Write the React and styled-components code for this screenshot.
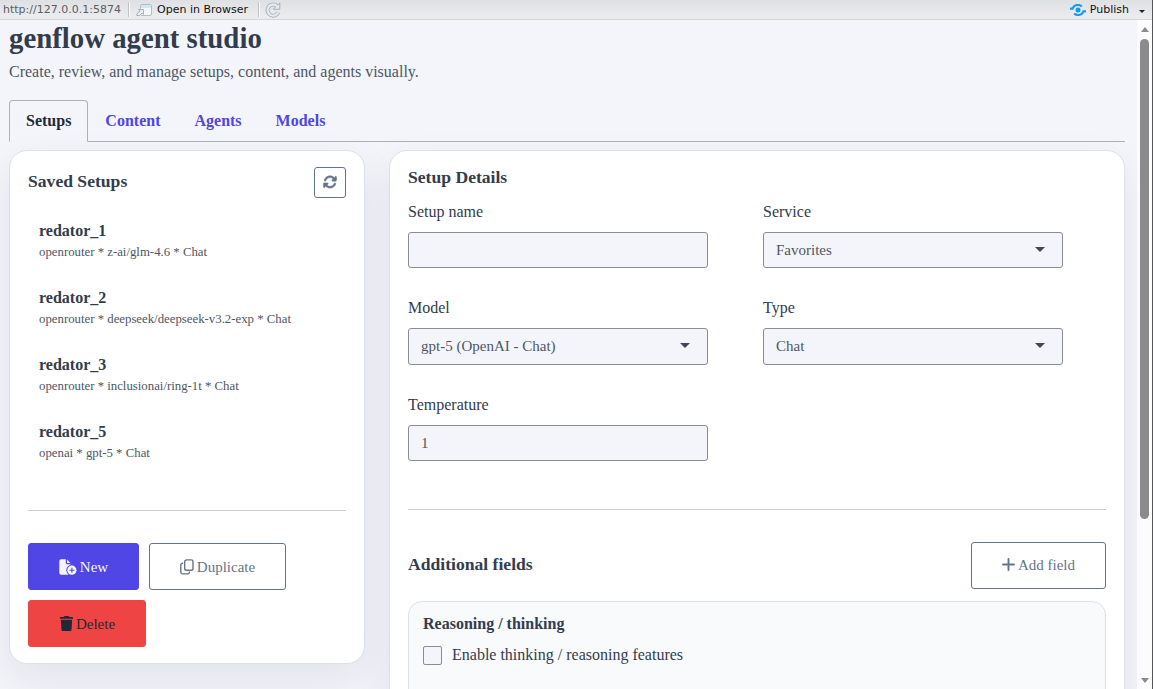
import React from "react";
import styled, { createGlobalStyle, css } from "styled-components";
import { FaArrowsRotate, FaTrash } from "react-icons/fa6";

const GlobalStyle = createGlobalStyle`
  * { box-sizing: border-box; }
  html, body { margin: 0; padding: 0; overflow: hidden; }
  body {
    background: #f4f5fb;
    color: #333c4d;
    font-family: "Liberation Serif", serif;
    font-size: 16px;
  }
  h1, h2, h3, p { margin: 0; }
  button, input { font-family: inherit; }
`;

const Window = styled.div`
  width: 1153px;
  height: 689px;
  display: flex;
  flex-direction: column;
  overflow: hidden;
  border-right: 1px solid #55565a;
`;

const Toolbar = styled.header`
  height: 20px;
  flex: none;
  display: flex;
  align-items: center;
  padding: 0 7px 0 3px;
  background: linear-gradient(#dfe0e4, #ececef 90%);
  border-bottom: 1px solid #d4d5d9;
  font: 11px/18px "DejaVu Sans", sans-serif;
  color: #111;
`;

const Address = styled.span`
  color: #5c5d61;
  width: 125px;
`;

const Separator = styled.span`
  width: 2px;
  height: 15px;
  background: #c0c1c5;
  border-right: 1px solid #fafafa;
`;

const ToolButton = styled.span`
  display: flex;
  align-items: center;
  gap: ${(p) => p.$gap || 5}px;
  margin-left: ${(p) => p.$left || 0};
  svg { display: block; }
`;

const Viewport = styled.div`
  flex: 1;
  min-height: 0;
  display: flex;
`;

const Page = styled.main`
  flex: 1;
  min-width: 0;
  padding: 1px 12px 0 9px;
  overflow: hidden;
`;

const Title = styled.h1`
  font-size: 28.8px;
  line-height: 34px;
`;

const Subtitle = styled.p`
  margin-top: 7px;
  line-height: 20px;
  color: #4d5665;
`;

const Tabs = styled.nav`
  display: flex;
  height: 42px;
  margin-top: 18px;
  border-bottom: 1px solid #adb1ba;
`;

const Tab = styled.a`
  height: 42px;
  padding: 0 16px;
  border: 1px solid transparent;
  border-radius: 4px 4px 0 0;
  line-height: 40px;
  font-weight: bold;
  color: #4f46e5;
  ${(p) => p.$active && css`
    color: #1f2937;
    background: #f4f5fb;
    border-color: #adb1ba #adb1ba transparent;
  `}
`;

const Columns = styled.div`
  display: grid;
  grid-template-columns: 356px 736px;
  column-gap: 24px;
  align-items: start;
  margin-top: 8px;
`;

const Card = styled.section`
  height: ${(p) => p.$height}px;
  padding: 16px 18px;
  background: #fff;
  border: 1px solid #dbe0ea;
  border-radius: 18px;
  box-shadow: 0 16px 40px rgba(15, 23, 42, 0.08);
`;

const Heading = styled.h2`
  font-size: 17.6px;
  line-height: 21px;
`;

const CardHeader = styled.div`
  display: flex;
  justify-content: space-between;
  align-items: center;
  ${Heading} { margin-bottom: 2px; }
`;

const Button = styled.button`
  display: inline-flex;
  align-items: center;
  justify-content: center;
  gap: ${(p) => p.$gap || 3}px;
  width: ${(p) => p.$width}px;
  height: ${(p) => p.$height || 47}px;
  padding: ${(p) => p.$drop || 0}px 0 0;
  font-size: 15px;
  border: 1px solid ${(p) => p.$fill || "#64748b"};
  border-radius: 3px;
  background: ${(p) => p.$fill || "#fff"};
  color: ${(p) => p.$ink || "#64748b"};
  svg { flex: none; margin-bottom: 2px; }
`;

const RefreshIcon = styled(FaArrowsRotate)`
  stroke: currentColor;
  stroke-width: 18px;
  overflow: visible;
`;

const SetupList = styled.ul`
  list-style: none;
  margin: 18px 0 0;
  padding: 0 11px;
`;

const SetupItem = styled.li`
  height: 67px;
  padding-top: 5px;
`;

const SetupName = styled.div`
  font-weight: bold;
  line-height: 20px;
`;

const SetupMeta = styled.div`
  margin-top: 3px;
  font-size: 12.8px;
  line-height: 17px;
  color: #4d5665;
`;

const Rule = styled.hr`
  height: 1px;
  margin: ${(p) => p.$top}px 0 32px;
  border: 0;
  background: #cccccf;
`;

const Actions = styled.div`
  display: flex;
  flex-wrap: wrap;
  gap: 10px;
`;

const Form = styled.div`
  display: grid;
  grid-template-columns: 300px 300px;
  grid-template-rows: 96px 97px 57px;
  column-gap: 55px;
  margin-top: 14px;
`;

const Field = styled.label`
  display: block;
`;

const Label = styled.span`
  display: block;
  line-height: 20px;
  margin-bottom: 10px;
`;

const Control = styled.div`
  height: ${(p) => p.$height || 36}px;
  display: flex;
  align-items: center;
  justify-content: space-between;
  padding: 0 17px 0 12px;
  background: #f4f5fb;
  border: 1px solid #868c9a;
  border-radius: 3px;
  font-size: 15px;
  color: #4d5665;
`;

const Caret = styled.span`
  border: 5px solid transparent;
  border-top-color: #3d4757;
  border-bottom: 0;
  margin-bottom: 2px;
`;

const Panel = styled.div`
  height: 150px;
  margin-top: 12px;
  padding: 12px 14px;
  background: #f8fafc;
  border: 1px solid #dbe0ea;
  border-radius: 14px;
`;

const PanelTitle = styled.h3`
  font-size: 16px;
  line-height: 20px;
`;

const CheckRow = styled.label`
  display: flex;
  align-items: center;
  gap: 10px;
  margin-top: 11px;
  line-height: 20px;
`;

const CheckBox = styled.span`
  width: 19px;
  height: 19px;
  border: 1px solid #868c9a;
  border-radius: 2px;
  background: #f4f5fb;
`;

const ScrollTrack = styled.aside`
  width: 15px;
  flex: none;
  display: flex;
  flex-direction: column;
  align-items: center;
  padding: 7px 0 6px;
  background: #fcfcfc;
`;

const ScrollArrow = styled.span`
  border: 4.5px solid transparent;
  ${(p) => p.$down
    ? css`border-top: 5px solid #8b8b8b; border-bottom: 0; margin-top: auto;`
    : css`border-bottom: 5px solid #8b8b8b; border-top: 0;`}
`;

const ScrollThumb = styled.span`
  width: 9px;
  height: 480px;
  margin-top: 7px;
  border-radius: 5px;
  background: #8b8b8b;
`;

const MenuCaret = styled.span`
  border: 3px solid transparent;
  border-top: 3px solid #222;
  border-bottom: 0;
  margin: 3px 0 0 6px;
`;

const SETUPS = [
  ["redator_1", "openrouter * z-ai/glm-4.6 * Chat"],
  ["redator_2", "openrouter * deepseek/deepseek-v3.2-exp * Chat"],
  ["redator_3", "openrouter * inclusionai/ring-1t * Chat"],
  ["redator_5", "openai * gpt-5 * Chat"],
];

function OpenIcon() {
  return (
    <svg width="16" height="14" viewBox="0 0 16 14">
      <rect x="4.500" y="1.500" width="11" height="11" rx="1.500" fill="#f4f6f9" stroke="#b3bcc9" />
      <path d="M5 2h10v3H5z" fill="#cfe5fa" />
      <path d="M2.500 6.500H7.500V11.500L6 10 3.500 12.500H.800V11L4 8z" fill="#e9edf2" stroke="#95a1b2" strokeWidth=".8" />
    </svg>
  );
}

function ReloadIcon() {
  return (
    <svg width="16" height="16" viewBox="0 0 16 16" fill="none">
      <path d="M12.200 4.200A5.600 5.600 0 1 0 13.300 10.300" stroke="#a5b0bf" strokeWidth="4" />
      <path d="M14.800.8v6.500H8.300z" fill="#e6eaf0" stroke="#a5b0bf" strokeLinejoin="round" />
      <path d="M12.200 4.200A5.600 5.600 0 1 0 13.300 10.300" stroke="#e6eaf0" strokeWidth="2.300" />
    </svg>
  );
}

function PublishIcon() {
  return (
    <svg width="16" height="12" viewBox="0 0 16 12" fill="none" stroke="#139bea">
      <circle cx="8" cy="6" r="2.500" fill="#139bea" stroke="none" />
      <path d="M0 4.600h2.600C3.500 2.300 5.300 1 7.800 1c1.800 0 3.100.5 4 1.500" strokeWidth="2.100" />
      <path d="M16 7.400h-2.600c-.9 2.300-2.700 3.600-5.200 3.600-1.800 0-3.100-.5-4-1.500" strokeWidth="2.100" />
    </svg>
  );
}

function NewFileIcon({ cut }) {
  return (
    <svg width="18" height="16" viewBox="0 0 18 16" fill="currentColor">
      <path d="M2.200.3H6.800V3.800A1.500 1.500 0 0 0 8.300 5.300H11.500V15.700H2.200A2 2 0 0 1 .3 13.800V2.200A2 2 0 0 1 2.200.3zM8 .5L11.400 4.100H8z" />
      <circle cx="12.900" cy="11.200" r="5.600" fill={cut} />
      <circle cx="12.900" cy="11.200" r="4.600" />
      <path d="M12.900 8.700v5M10.400 11.200h5" stroke={cut} strokeWidth="1.100" />
    </svg>
  );
}

function CopyIcon() {
  return (
    <svg width="14" height="16" viewBox="0 0 14 16" fill="none" stroke="currentColor" strokeWidth="1.400">
      <rect x="4.700" y=".9" width="8.300" height="10.300" rx="1.800" />
      <path d="M3.200 4.200h-.6A1.800 1.800 0 0 0 .8 6v7.100a1.800 1.800 0 0 0 1.800 1.800h5.100a1.800 1.800 0 0 0 1.800-1.800v-.5" />
    </svg>
  );
}

function PlusIcon() {
  return (
    <svg width="13" height="13" viewBox="0 0 13 13" fill="none" stroke="currentColor" strokeWidth="1.900" strokeLinecap="round">
      <path d="M6.500 1v11M1 6.500h11" />
    </svg>
  );
}

function SelectField({ label, value, height }) {
  return (
    <Field>
      <Label>{label}</Label>
      <Control $height={height}>{value}<Caret /></Control>
    </Field>
  );
}

export default function App() {
  return (
    <>
      <GlobalStyle />
      <Window>
        <Toolbar>
          <Address>http://127.0.0.1:5874</Address>
          <Separator />
          <ToolButton $left="6px"><OpenIcon />Open in Browser</ToolButton>
          <ToolButton $left="10px"><Separator /><ReloadIcon /></ToolButton>
          <ToolButton $left="auto" $gap={4}><PublishIcon />Publish<MenuCaret /></ToolButton>
        </Toolbar>
        <Viewport>
          <Page>
            <Title>genflow agent studio</Title>
            <Subtitle>Create, review, and manage setups, content, and agents visually.</Subtitle>
            <Tabs>
              <Tab $active>Setups</Tab>
              <Tab>Content</Tab>
              <Tab>Agents</Tab>
              <Tab>Models</Tab>
            </Tabs>
            <Columns>
              <Card $height={514}>
                <CardHeader>
                  <Heading>Saved Setups</Heading>
                  <Button $width={32} $height={31}><RefreshIcon size={14} /></Button>
                </CardHeader>
                <SetupList>
                  {SETUPS.map(([name, meta]) => (
                    <SetupItem key={name}>
                      <SetupName>{name}</SetupName>
                      <SetupMeta>{meta}</SetupMeta>
                    </SetupItem>
                  ))}
                </SetupList>
                <Rule $top={26} />
                <Actions>
                  <Button $width={111} $drop={2} $fill="#4f46e5" $ink="#f4f5fb"><NewFileIcon cut="#4f46e5" />New</Button>
                  <Button $width={137} $drop={2}><CopyIcon />Duplicate</Button>
                  <Button $width={118} $drop={2} $gap={2} $fill="#ef4444" $ink="#1f2937"><FaTrash size={15} />Delete</Button>
                </Actions>
              </Card>
              <Card $height={700}>
                <Heading>Setup Details</Heading>
                <Form>
                  <Field>
                    <Label>Setup name</Label>
                    <Control />
                  </Field>
                  <SelectField label="Service" value="Favorites" />
                  <SelectField label="Model" value="gpt-5 (OpenAI - Chat)" height={37} />
                  <SelectField label="Type" value="Chat" height={37} />
                  <Field>
                    <Label>Temperature</Label>
                    <Control>1</Control>
                  </Field>
                </Form>
                <Rule $top={57} />
                <CardHeader>
                  <Heading>Additional fields</Heading>
                  <Button $width={135}><PlusIcon />Add field</Button>
                </CardHeader>
                <Panel>
                  <PanelTitle>Reasoning / thinking</PanelTitle>
                  <CheckRow><CheckBox />Enable thinking / reasoning features</CheckRow>
                </Panel>
              </Card>
            </Columns>
          </Page>
          <ScrollTrack>
            <ScrollArrow />
            <ScrollThumb />
            <ScrollArrow $down />
          </ScrollTrack>
        </Viewport>
      </Window>
    </>
  );
}
